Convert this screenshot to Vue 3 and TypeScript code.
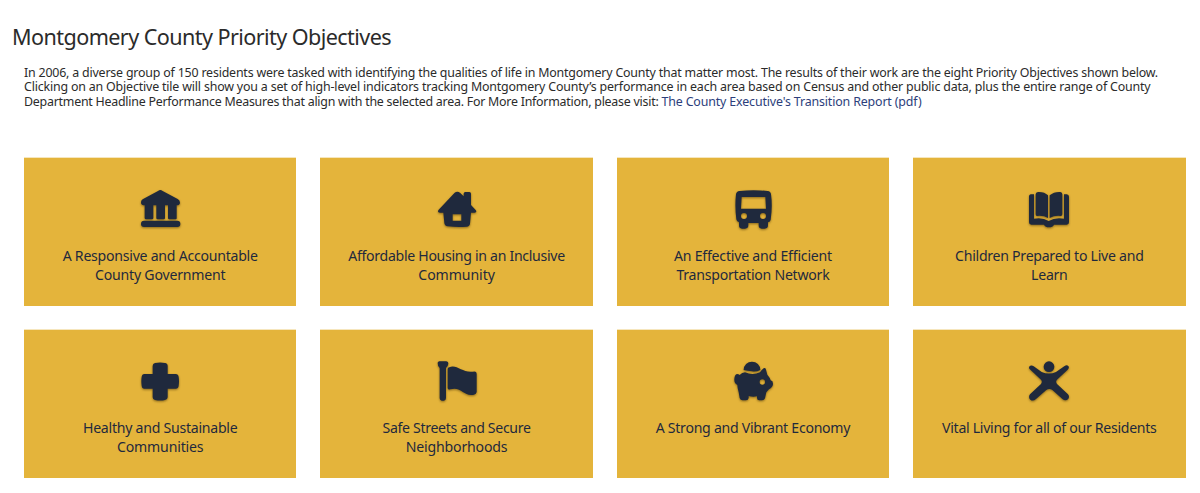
<script setup lang="ts">
import type { Directive } from 'vue'

interface Line { text: string; width: number }
interface Tile { icon: string; lines: Line[] }

// Tracks a line of text so that it spans the given width
const vTrack: Directive<HTMLElement, number> = {
  mounted(el, { value }) {
    const natural = el.getBoundingClientRect().width
    const count = (el.textContent ?? '').length
    el.style.letterSpacing = `${(value - natural) / count}px`
  },
}

const intro: Line[] = [
  { text: 'In 2006, a diverse group of 150 residents were tasked with identifying the qualities of life in Montgomery County that matter most. The results of their work are the eight Priority Objectives shown below.', width: 1134 },
  { text: 'Clicking on an Objective tile will show you a set of high-level indicators tracking Montgomery County’s performance in each area based on Census and other public data, plus the entire range of County', width: 1126.5 },
]

const tiles: Tile[] = [
  { icon: 'bank', lines: [{ text: 'A Responsive and Accountable', width: 195 }, { text: 'County Government', width: 130.5 }] },
  { icon: 'house', lines: [{ text: 'Affordable Housing in an Inclusive', width: 216.5 }, { text: 'Community', width: 76.5 }] },
  { icon: 'bus', lines: [{ text: 'An Effective and Efficient', width: 158 }, { text: 'Transportation Network', width: 153 }] },
  { icon: 'book', lines: [{ text: 'Children Prepared to Live and', width: 188.5 }, { text: 'Learn', width: 36.5 }] },
  { icon: 'cross', lines: [{ text: 'Healthy and Sustainable', width: 154.5 }, { text: 'Communities', width: 86.5 }] },
  { icon: 'flag', lines: [{ text: 'Safe Streets and Secure', width: 148 }, { text: 'Neighborhoods', width: 101.5 }] },
  { icon: 'pig', lines: [{ text: 'A Strong and Vibrant Economy', width: 194.5 }] },
  { icon: 'person', lines: [{ text: 'Vital Living for all of our Residents', width: 214.5 }] },
]
</script>

<template>
  <main class="page">
    <h1><span v-track="379">Montgomery County Priority Objectives</span></h1>
    <p class="intro">
      <span v-for="line in intro" :key="line.text" class="row"><span v-track="line.width">{{ line.text }}</span></span>
      <span class="row"><span v-track="637.5">Department Headline Performance Measures that align with the selected area. For More Information, please visit: </span><a v-track="260">The County Executive's Transition Report (pdf)</a></span>
    </p>
    <section class="grid">
      <article v-for="tile in tiles" :key="tile.icon" class="tile">
        <svg class="icon" viewBox="0 0 180 180" aria-hidden="true">
          <g v-if="tile.icon === 'bank'">
            <path d="M91 30 Q94 30 98 33 L143 57 Q150 61 150 68 Q149 76 140 76 V115 Q140 118 137 118 H118 Q114 118 114 114 V76 H105 V114 Q105 118 101 118 H83 Q79 118 79 114 V76 H70 V114 Q70 118 66 118 H48 Q44 118 44 114 V76 Q34 76 33 69 Q32 62 38 58 L84 33 Q88 30 91 30Z" />
            <rect x="33" y="122" width="118" height="19" rx="9" />
          </g>
          <path v-else-if="tile.icon === 'house'" fill-rule="evenodd" d="M83 38 Q91 32 99 38 L110 49 V41 Q110 36 115 36 H127 Q132 36 132 41 V75 L146 90 Q151 97 143 98 H132 L129 131 Q128 139 119 140 Q91 142 62 139 Q53 138 52 129 L49 98 H39 Q29 97 35 89Z M77 103 V122 H103 V103Z" />
          <path v-else-if="tile.icon === 'bus'" fill-rule="evenodd" d="M50 33 Q91 28 134 33 Q143 34 144 43 Q149 79 143 119 Q142 126 135 127 V136 Q135 146 125 146 H116 Q107 146 107 136 V129 H76 V136 Q76 146 66 146 H57 Q48 146 48 136 V127 Q41 126 40 118 Q35 79 39 43 Q40 34 50 33Z M56 51 L54 86 H129 L127 51Z M63 99 A9 9 0 1 0 63 117 A9 9 0 1 0 63 99Z M120 99 A9 9 0 1 0 120 117 A9 9 0 1 0 120 99Z" />
          <g v-else-if="tile.icon === 'book'">
            <path d="M30 49 Q30 44 35 43 H45 V116 Q70 111 89 123 Q109 111 135 116 V43 H143 Q150 44 150 50 V127 Q150 134 143 134 H105 Q101 142 90 142 Q79 142 75 134 H37 Q30 134 30 127Z" />
            <path d="M50 43 Q50 37 57 36 Q76 35 87 46 V114 Q74 106 54 108 Q50 108 50 103Z" />
            <path d="M92 46 Q105 35 124 36 Q130 37 130 43 V103 Q130 108 125 108 Q106 106 92 114Z" />
          </g>
          <path v-else-if="tile.icon === 'cross'" d="M75 33 Q91 30 105 33 Q113 34 113 42 V66 H137 Q145 66 146 75 Q148 88 146 101 Q145 110 137 110 H113 V136 Q113 143 105 144 Q91 147 75 144 Q68 143 68 136 V110 H43 Q36 110 35 101 Q33 88 35 75 Q36 66 43 66 H68 V42 Q68 34 75 33Z" />
          <g v-else-if="tile.icon === 'flag'">
            <path d="M32 34 Q31 29 37 28 H58 Q65 29 64 35 Q63 43 57 48 V138 Q57 145 51 146 H44 Q38 145 38 139 V48 Q32 43 32 34Z" />
            <path d="M62 51 Q62 47 67 46 C89 36 107 64 138 59 Q149 57 149 65 V120 Q148 126 141 128 C111 136 104 102 70 112 Q62 114 62 108Z" />
          </g>
          <g v-else-if="tile.icon === 'pig'">
            <path d="M62 54 A25 25 0 0 1 112 54 Q100 60 87 58 Q74 57 62 54Z" />
            <path fill-rule="evenodd" d="M50 69 Q57 62 66 61 Q89 71 111 61 Q116 54 122 49 Q128 46 129 53 L133 68 Q141 77 143 85 Q151 87 150 97 Q149 106 138 112 Q134 117 130 121 L126 139 Q124 145 117 145 H109 Q102 145 102 138 V133 Q90 136 77 132 V138 Q76 145 69 145 H59 Q52 145 50 138 L47 121 Q43 108 43 99 Q33 94 34 81 Q35 67 42 66 Q47 66 50 69Z M118 82 A8 8 0 1 0 118 98 A8 8 0 1 0 118 82Z" />
          </g>
          <g v-else>
            <circle cx="90" cy="44" r="16" />
            <path d="M31 50 Q28 44 34 41 Q39 39 44 43 L68 60 Q90 69 111 60 L137 42 Q143 38 148 42 Q152 48 146 53 L114 83 Q109 88 114 96 L147 127 Q153 134 147 142 Q139 148 131 142 L101 115 Q91 107 81 115 L51 141 Q42 149 34 143 Q27 136 33 127 L66 96 Q71 89 66 83Z" />
          </g>
        </svg>
        <h2>
          <span v-for="line in tile.lines" :key="line.text" class="row"><span v-track="line.width">{{ line.text }}</span></span>
        </h2>
      </article>
    </section>
  </main>
</template>

<style>
body {
  margin: 0;
  background: #fff;
}
</style>

<style scoped>
.page {
  box-sizing: border-box;
  width: 1200px;
  height: 493px;
  padding: 21px 14.5px 0 12px;
  overflow: hidden;
  font-family: "Noto Sans", "Open Sans", sans-serif;
  color: #2b2b2b;
}
h1 {
  margin: 0;
  font-size: 21.6px;
  font-weight: 400;
  line-height: 31px;
}
.row {
  display: block;
  white-space: pre;
}
.row > * {
  display: inline-block;
  vertical-align: top;
}
.intro {
  margin: 14px 0 0 12px;
  font-size: 12.4px;
  line-height: 14.4px;
}
a {
  color: #2c3e7b;
}
.grid {
  display: grid;
  grid-template-columns: repeat(4, 1fr);
  grid-auto-rows: 148px;
  gap: 24px;
  margin: 48.8px 0 0 12px;
}
.tile {
  display: flex;
  flex-direction: column;
  align-items: center;
  box-sizing: border-box;
  padding-top: 22px;
  background: #e4b43b;
  box-shadow: 0 -1px 0 #f6e6bd;
  color: #1f293d;
}
.icon {
  width: 60px;
  height: 60px;
  fill: #1f293d;
  filter: drop-shadow(0.5px 1px 0.8px rgba(60, 40, 0, 0.55));
}
h2 {
  margin: 6px 0 0;
  font-size: 14.1px;
  font-weight: 400;
  line-height: 19.4px;
  text-align: center;
}
</style>
